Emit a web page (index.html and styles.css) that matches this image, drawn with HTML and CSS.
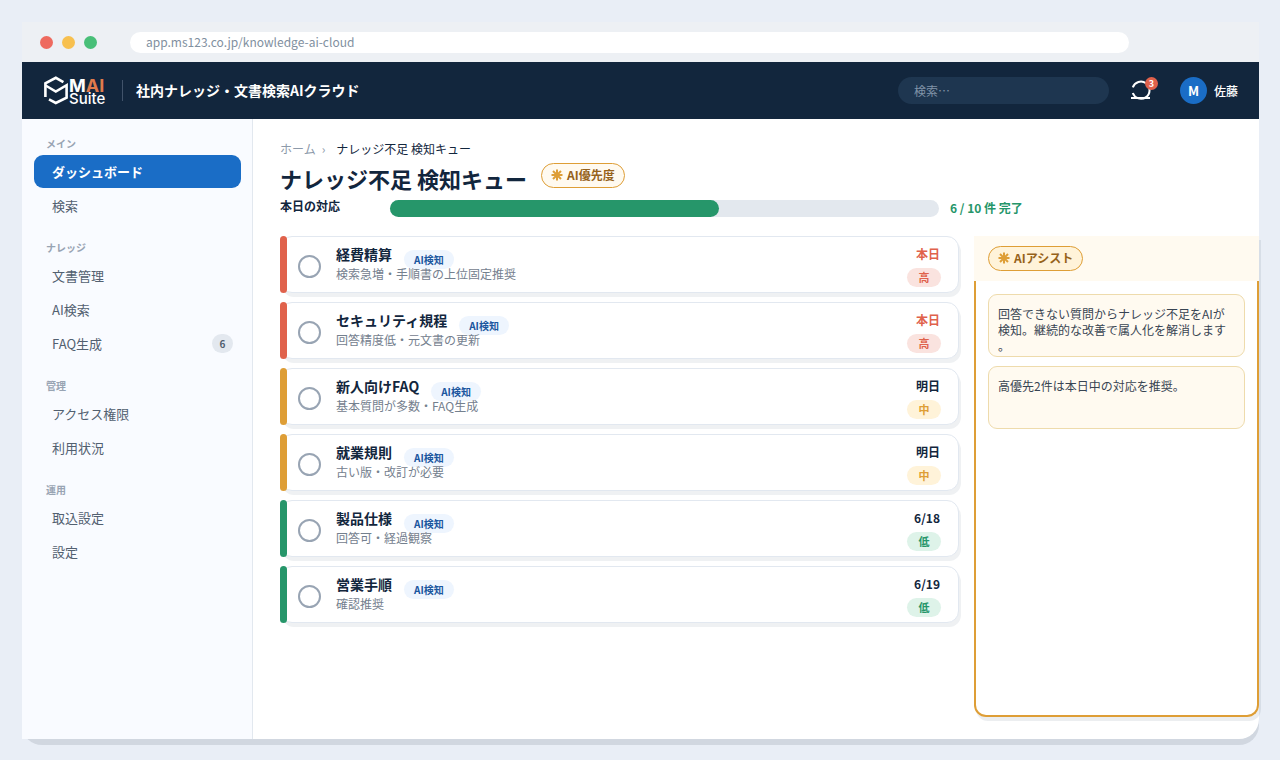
FILE: index.html
```
<!DOCTYPE html>
<html lang="ja">
<head>
    <meta charset="UTF-8">
    <meta name="viewport" content="width=device-width, initial-scale=1.0">
    <title>ナレッジ不足 検知キュー - 社内ナレッジ・文書検索AIクラウド</title>
    <link rel="stylesheet" href="styles.css">
</head>
<body>
    <svg width="0" height="0" class="sprite" aria-hidden="true">
        <symbol id="spark" viewBox="0 0 12 12">
            <path d="M6 0.5V11.5M0.5 6H11.5M2 2L10 10M10 2L2 10" stroke="currentColor" stroke-width="2" fill="none"/>
        </symbol>
    </svg>

    <div class="window">
        <div class="browser-bar">
            <span class="dot dot-red"></span>
            <span class="dot dot-yellow"></span>
            <span class="dot dot-green"></span>
            <input class="url" type="text" value="app.ms123.co.jp/knowledge-ai-cloud" aria-label="URL" readonly>
        </div>

        <header class="app-header">
            <svg class="logo" width="64" height="32" viewBox="0 0 64 32" role="img" aria-label="MAI Suite">
                <g fill="none" stroke="#fff" stroke-width="2.6">
                    <path d="M2.4 22V8.4L12.8 2.8L20.4 7.2"/>
                    <path d="M2.6 10.5L12.8 16.5L23.6 10.2V22.6L12.8 28L6 24.4"/>
                </g>
                <text class="logo-main" x="26" y="17">M<tspan class="logo-ai">AI</tspan></text>
                <text class="logo-sub" x="26" y="29">Suite</text>
            </svg>
            <span class="divider"></span>
            <div class="app-name">社内ナレッジ・文書検索AIクラウド</div>
            <input class="search" type="search" placeholder="検索…" aria-label="検索">
            <button class="bell" type="button" aria-label="通知">
                <svg width="22" height="22" viewBox="0 0 22 22" fill="none" stroke="#fff" stroke-width="2">
                    <path d="M2.8 7.4A8.6 8.6 0 1 1 2.8 13"/>
                    <path d="M1 18H20"/>
                </svg>
                <span class="bell-count">3</span>
            </button>
            <button class="user" type="button"><span class="avatar">M</span>佐藤</button>
        </header>

        <div class="body">
            <nav class="sidebar">
                <div class="nav-group">
                    <div class="nav-label">メイン</div>
                    <a class="nav-item active" href="#">ダッシュボード</a>
                    <a class="nav-item" href="#">検索</a>
                </div>
                <div class="nav-group">
                    <div class="nav-label">ナレッジ</div>
                    <a class="nav-item" href="#">文書管理</a>
                    <a class="nav-item" href="#">AI検索</a>
                    <a class="nav-item" href="#">FAQ生成<span class="nav-count">6</span></a>
                </div>
                <div class="nav-group">
                    <div class="nav-label">管理</div>
                    <a class="nav-item" href="#">アクセス権限</a>
                    <a class="nav-item" href="#">利用状況</a>
                </div>
                <div class="nav-group">
                    <div class="nav-label">運用</div>
                    <a class="nav-item" href="#">取込設定</a>
                    <a class="nav-item" href="#">設定</a>
                </div>
            </nav>

            <main class="main">
                <div class="breadcrumb">
                    <a href="#">ホーム</a><span class="sep">›</span><span>ナレッジ不足 検知キュー</span>
                </div>
                <div class="title-row">
                    <h1>ナレッジ不足 検知キュー</h1>
                    <span class="ai-badge"><svg width="12" height="12"><use href="#spark"/></svg>AI優先度</span>
                </div>
                <div class="progress-row">
                    <span class="progress-label" id="progress-label">本日の対応</span>
                    <div class="progress" role="progressbar" aria-labelledby="progress-label" aria-valuenow="6" aria-valuemin="0" aria-valuemax="10">
                        <div class="progress-fill" style="width: 60%"></div>
                    </div>
                    <span class="progress-text">6 / 10 件 完了</span>
                </div>

                <div class="content">
                    <div class="queue">
                        <div class="task high">
                            <input type="checkbox" id="task1">
                            <div class="task-body">
                                <div class="task-head"><label for="task1">経費精算</label><span class="tag">AI検知</span></div>
                                <div class="task-desc">検索急増・手順書の上位固定推奨</div>
                            </div>
                            <div class="task-side"><span class="due">本日</span><span class="level">高</span></div>
                        </div>
                        <div class="task high">
                            <input type="checkbox" id="task2">
                            <div class="task-body">
                                <div class="task-head"><label for="task2">セキュリティ規程</label><span class="tag">AI検知</span></div>
                                <div class="task-desc">回答精度低・元文書の更新</div>
                            </div>
                            <div class="task-side"><span class="due">本日</span><span class="level">高</span></div>
                        </div>
                        <div class="task mid">
                            <input type="checkbox" id="task3">
                            <div class="task-body">
                                <div class="task-head"><label for="task3">新人向けFAQ</label><span class="tag">AI検知</span></div>
                                <div class="task-desc">基本質問が多数・FAQ生成</div>
                            </div>
                            <div class="task-side"><span class="due">明日</span><span class="level">中</span></div>
                        </div>
                        <div class="task mid">
                            <input type="checkbox" id="task4">
                            <div class="task-body">
                                <div class="task-head"><label for="task4">就業規則</label><span class="tag">AI検知</span></div>
                                <div class="task-desc">古い版・改訂が必要</div>
                            </div>
                            <div class="task-side"><span class="due">明日</span><span class="level">中</span></div>
                        </div>
                        <div class="task low">
                            <input type="checkbox" id="task5">
                            <div class="task-body">
                                <div class="task-head"><label for="task5">製品仕様</label><span class="tag">AI検知</span></div>
                                <div class="task-desc">回答可・経過観察</div>
                            </div>
                            <div class="task-side"><span class="due">6/18</span><span class="level">低</span></div>
                        </div>
                        <div class="task low">
                            <input type="checkbox" id="task6">
                            <div class="task-body">
                                <div class="task-head"><label for="task6">営業手順</label><span class="tag">AI検知</span></div>
                                <div class="task-desc">確認推奨</div>
                            </div>
                            <div class="task-side"><span class="due">6/19</span><span class="level">低</span></div>
                        </div>
                    </div>

                    <aside class="assist">
                        <div class="assist-head">
                            <span class="ai-badge strong"><svg width="12" height="12"><use href="#spark"/></svg>AIアシスト</span>
                        </div>
                        <div class="assist-body">
                            <p class="note">回答できない質問からナレッジ不足をAIが検知。継続的な改善で属人化を解消します。</p>
                            <p class="note">高優先2件は本日中の対応を推奨。</p>
                        </div>
                    </aside>
                </div>
            </main>
        </div>
    </div>
</body>
</html>
```
FILE: styles.css
```
* {
    box-sizing: border-box;
}
body {
    margin: 0;
    padding: 22px 21px 21px 22px;
    background-color: #e9eef6;
    color: #12263d;
    font-family: "Noto Sans CJK JP", sans-serif;
    font-size: 12px;
    line-height: 16px;
}
input,
button {
    font: inherit;
    border: none;
    padding: 0;
    background: none;
}
a {
    color: inherit;
    text-decoration: none;
}
.sprite {
    position: absolute;
}
.window {
    display: flex;
    flex-direction: column;
    min-height: calc(100vh - 43px);
    background-color: #fff;
    border-radius: 0 0 20px 20px;
    box-shadow: 0 6px 0 #d1d7e0;
}

/* Browser bar */
.browser-bar {
    display: flex;
    align-items: center;
    gap: 9px;
    height: 40px;
    padding: 0 130px 0 18px;
    background-color: #edf0f4;
}
.dot {
    width: 13px;
    height: 13px;
    border-radius: 50%;
}
.dot-red {
    background-color: #ee6a5f;
}
.dot-yellow {
    background-color: #f7c04f;
}
.dot-green {
    background-color: #48bf78;
}
.url {
    flex: 1;
    height: 21px;
    margin-left: 24px;
    padding: 0 16px 2px;
    border-radius: 11px;
    background-color: #fff;
    color: #8190a0;
}

/* Header */
.app-header {
    display: flex;
    align-items: center;
    height: 57px;
    padding: 0 21px;
    background-color: #12263d;
    color: #fff;
}
.logo {
    font-family: Inter, sans-serif;
    fill: #fff;
}
.logo-main {
    font-size: 18px;
    font-weight: 700;
}
.logo-ai {
    fill: #e07b4c;
}
.logo-sub {
    font-size: 15px;
    font-weight: 500;
}
.divider {
    width: 1px;
    height: 21px;
    margin: 0 13px 0 15px;
    background-color: #41536a;
}
.app-name {
    padding-bottom: 2px;
    font-size: 14px;
    font-weight: 700;
}
.search {
    width: 211px;
    height: 27px;
    margin-left: auto;
    padding: 0 16px;
    border-radius: 14px;
    background-color: #1e3650;
    color: #fff;
}
.search::placeholder {
    color: #8093a8;
}
.bell {
    position: relative;
    display: flex;
    margin: 0 28px 0 21px;
}
.bell-count {
    position: absolute;
    top: -3px;
    right: -6px;
    width: 13px;
    height: 13px;
    border-radius: 50%;
    background-color: #e0614b;
    color: #fff;
    font-size: 9px;
    font-weight: 700;
    line-height: 13px;
}
.user {
    display: flex;
    align-items: center;
    gap: 7px;
    color: #fff;
    font-weight: 500;
}
.avatar {
    width: 27px;
    height: 27px;
    border-radius: 50%;
    background-color: #1a6dc6;
    font-size: 13px;
    font-weight: 700;
    line-height: 27px;
}

.body {
    display: flex;
    flex: 1;
}

/* Sidebar */
.sidebar {
    flex: 0 0 231px;
    padding: 17px 11px 17px 12px;
    border-right: 1px solid #e2e8ef;
    background-color: #f9fbff;
}
.nav-group {
    margin-bottom: 18px;
}
.nav-label {
    margin-bottom: 3px;
    padding-left: 12px;
    color: #98a4b3;
    font-size: 10px;
    font-weight: 700;
}
.nav-item {
    display: flex;
    align-items: center;
    justify-content: space-between;
    height: 33px;
    margin-bottom: 1px;
    padding: 0 8px 0 18px;
    border-radius: 9px;
    color: #526070;
    font-size: 13px;
}
.nav-item.active {
    background-color: #1a6dc6;
    color: #fff;
    font-weight: 700;
}
.nav-count {
    width: 21px;
    height: 19px;
    border-radius: 10px;
    background-color: #e3e8ef;
    font-size: 10px;
    font-weight: 700;
    line-height: 19px;
    text-align: center;
}

/* Main */
.main {
    flex: 1;
    display: flex;
    flex-direction: column;
    padding: 22px 0 22px 27px;
}
.breadcrumb a,
.sep {
    color: #8d9aaa;
}
.sep {
    margin: 0 11px 0 6px;
}
.title-row {
    display: flex;
    align-items: flex-start;
    gap: 14px;
    margin-top: 6px;
}
h1 {
    margin: 2px 0;
    font-size: 22px;
    font-weight: 700;
    line-height: 26px;
}
.ai-badge {
    display: inline-flex;
    align-items: center;
    gap: 4px;
    height: 25px;
    padding: 0 9px 1px;
    border: 1px solid #de9e36;
    border-radius: 13px;
    background-color: #fffaf0;
    color: #96621a;
    font-weight: 700;
}
.ai-badge.strong {
    background-color: #fff3d9;
}
.ai-badge svg {
    color: #de9e36;
}
.progress-row {
    display: flex;
    align-items: center;
    margin-top: 7px;
    height: 17px;
    font-weight: 700;
}
.progress-label {
    width: 110px;
    padding-bottom: 5px;
}
.progress {
    flex: 1;
    height: 17px;
    border-radius: 9px;
    background-color: #e3e8ee;
}
.progress-fill {
    height: 100%;
    border-radius: 9px;
    background-color: #26966a;
}
.progress-text {
    width: 309px;
    margin-left: 11px;
    padding-bottom: 2px;
    color: #26966a;
}
.content {
    flex: 1;
    display: grid;
    grid-template-columns: 1fr 285px;
    gap: 15px;
    margin-top: 19px;
}

/* Queue */
.queue {
    display: flex;
    flex-direction: column;
    gap: 9px;
}
.task {
    --color: #26966a;
    --soft: #def3e9;
    position: relative;
    display: flex;
    align-items: center;
    height: 57px;
    padding: 0 17px;
    border: 1px solid #e2e8f0;
    border-radius: 12px;
    background-color: #fff;
    box-shadow: 2px 4px 0 #eff1f3;
}
.task::before {
    content: "";
    position: absolute;
    top: -1px;
    bottom: -1px;
    left: -1px;
    width: 7px;
    border-radius: 4px;
    background-color: var(--color);
}
.task.high {
    --color: #e0624c;
    --soft: #fae3df;
}
.task.mid {
    --color: #de9e36;
    --soft: #fff3d9;
}
.task input {
    appearance: none;
    width: 23px;
    height: 23px;
    margin: 4px 15px 0 0;
    border: 2px solid #98a4b3;
    border-radius: 50%;
}
.task input:checked {
    background-color: #26966a;
}
.task-body {
    flex: 1;
}
.task-head {
    display: flex;
    align-items: flex-start;
    gap: 12px;
    height: 18px;
}
.task-head label {
    font-size: 14px;
    font-weight: 700;
    line-height: 14px;
}
.tag {
    margin-top: 3px;
    padding: 0 10px;
    border-radius: 10px;
    background-color: #eef5fe;
    color: #1a569e;
    font-size: 10px;
    font-weight: 700;
    line-height: 19px;
}
.task-desc {
    position: relative;
    margin-top: 1px;
    color: #74808e;
}
.task-side {
    display: flex;
    flex-direction: column;
    align-items: flex-end;
    gap: 6px;
    padding-top: 4px;
    font-weight: 700;
}
.due {
    padding-right: 1px;
}
.task.high .due,
.level {
    color: var(--color);
}
.level {
    width: 34px;
    border-radius: 10px;
    background-color: var(--soft);
    font-size: 11px;
    line-height: 19px;
    text-align: center;
}

/* AI assist */
.assist {
    display: flex;
    flex-direction: column;
    border-radius: 0 0 12px 12px;
    box-shadow: 2px 4px 0 rgba(18, 38, 61, 0.08);
}
.assist-head {
    display: flex;
    align-items: center;
    height: 45px;
    padding: 0 14px;
    background-color: #fffaf0;
}
.assist-body {
    flex: 1;
    padding: 13px 12px;
    border: 2px solid #de9e36;
    border-top: none;
    border-radius: 0 0 12px 12px;
    background-color: #fff;
}
.note {
    min-height: 63px;
    margin: 0 0 9px;
    padding: 11px 9px 2px;
    border: 1px solid #eedbac;
    border-radius: 9px;
    background-color: #fffaf0;
    color: #384452;
    line-break: anywhere;
}
```
